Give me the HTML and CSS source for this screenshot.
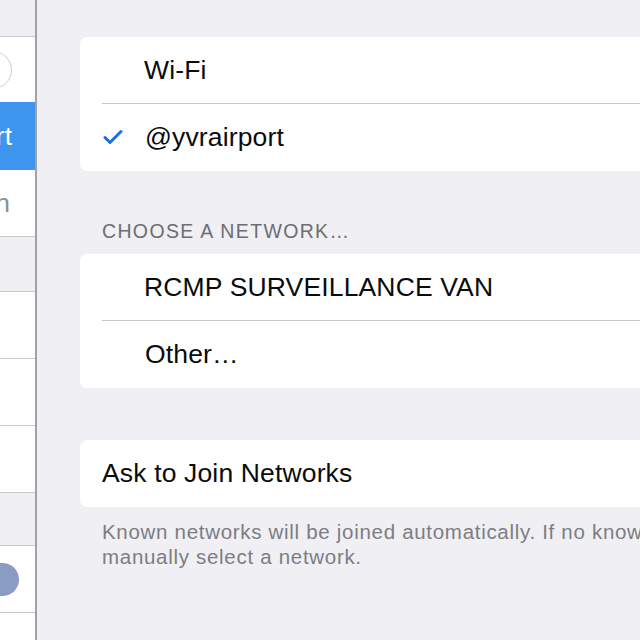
FILE: index.html
```html
<!DOCTYPE html>
<html>
<head>
<meta charset="utf-8">
<link rel="stylesheet" href="styles.css">
</head>
<body>
<div class="screen">
  <aside class="sidebar">
    <div class="sb-inner">
      <div class="sb-gap sb-top"></div>
      <div class="sb-row sb-search-row"><div class="sb-search"></div></div>
      <div class="sb-row sb-selected"><span class="sb-value">@yvrairport</span></div>
      <div class="sb-row sb-plain"><span class="sb-detail">On</span></div>
      <div class="sb-gap sb-section"></div>
      <div class="sb-row sb-plain sb-line"></div>
      <div class="sb-row sb-plain sb-line"></div>
      <div class="sb-row sb-plain"></div>
      <div class="sb-gap sb-section2"></div>
      <div class="sb-row sb-plain"><span class="sb-pill"></span></div>
      <div class="sb-rest"></div>
    </div>
  </aside>
  <main class="main">
    <section class="card">
      <div class="row"><span class="label">Wi-Fi</span></div>
      <div class="row row-sep">
        <svg class="check" width="20" height="16" viewBox="0 0 20 16"><path d="M2 8.5 L7 13.5 L18 2.5" fill="none" stroke="#1b6fe0" stroke-width="3" stroke-linecap="round" stroke-linejoin="round"/></svg>
        <span class="label">@yvrairport</span>
      </div>
    </section>
    <h2 class="group-header">CHOOSE A NETWORK…</h2>
    <section class="card">
      <div class="row"><span class="label">RCMP SURVEILLANCE VAN</span></div>
      <div class="row row-sep"><span class="label">Other…</span></div>
    </section>
    <section class="card card-single">
      <div class="row row-plain"><span class="label">Ask to Join Networks</span></div>
    </section>
    <p class="footer">Known networks will be joined automatically. If no known networks are available, you will have to<br>manually select a network.</p>
  </main>
</div>
</body>
</html>
```
FILE: styles.css
```css
html, body {
  margin: 0;
  padding: 0;
}
body {
  width: 640px;
  height: 640px;
  overflow: hidden;
  background: #efeff4;
  font-family: "Liberation Sans", Arial, sans-serif;
}
.screen {
  display: flex;
  height: 640px;
}
.sidebar {
  width: 35px;
  flex: none;
  overflow: hidden;
  border-right: 2px solid #a2a2a6;
  background: #ffffff;
}
.sb-inner {
  width: 300px;
  margin-left: -265px;
  display: flex;
  flex-direction: column;
}
.sb-gap {
  background: #efeff4;
  border-bottom: 1px solid #c8c7cc;
}
.sb-top { height: 36px; }
.sb-section { height: 54px; border-top: 1px solid #c8c7cc; }
.sb-section2 { height: 52px; border-top: 1px solid #c8c7cc; }
.sb-row {
  display: flex;
  align-items: center;
  justify-content: flex-end;
  background: #fff;
  padding-right: 23px;
}
.sb-search-row { height: 65px; }
.sb-search {
  width: 260px;
  height: 36px;
  border: 1.5px solid #cfcfd3;
  border-radius: 20px;
}
.sb-selected {
  height: 68px;
  background: #3d95ef;
}
.sb-value {
  color: #fff;
  font-size: 26.5px;
}
.sb-plain { height: 66px; }
.sb-line { border-bottom: 1px solid #c8c7cc; }
.sb-detail {
  color: #8e8e93;
  font-size: 26.5px;
  margin-right: 2px;
}
.sb-pill {
  width: 52px;
  height: 33px;
  border-radius: 17px;
  background: #8a9cc4;
  margin-right: -7px;
}
.sb-rest {
  border-top: 1px solid #c8c7cc;
  height: 40px;
  background: #fff;
}
.main {
  flex: 1;
  min-width: 0;
  padding: 37px 0 0 43px;
  display: flex;
  flex-direction: column;
  align-items: flex-start;
}
.card {
  width: 620px;
  background: #fff;
  border-radius: 7px;
  display: flex;
  flex-direction: column;
  flex: none;
}
.row {
  height: 66px;
  display: flex;
  align-items: center;
  padding-left: 64px;
  position: relative;
}
.row-sep {
  height: 67px;
  border-top: 1px solid #c8c7cc;
  margin-left: 22px;
  padding-left: 43px;
}
.row-plain {
  height: 67px;
  padding-left: 22px;
}
.label {
  font-size: 26.5px;
  color: #0b0b0b;
  letter-spacing: 0.15px;
}
.check {
  position: absolute;
  left: 1px;
  top: 25px;
}
.group-header {
  margin: 48px 0 11px 22px;
  height: 24px;
  line-height: 24px;
  font-size: 19.5px;
  font-weight: normal;
  color: #6d6d72;
  letter-spacing: 1.35px;
}
.card-single {
  margin-top: 52px;
}
.footer {
  margin: 12px 0 0 22px;
  white-space: nowrap;
  font-size: 20.5px;
  line-height: 25px;
  letter-spacing: 0.7px;
  color: #7d7d82;
}
```
